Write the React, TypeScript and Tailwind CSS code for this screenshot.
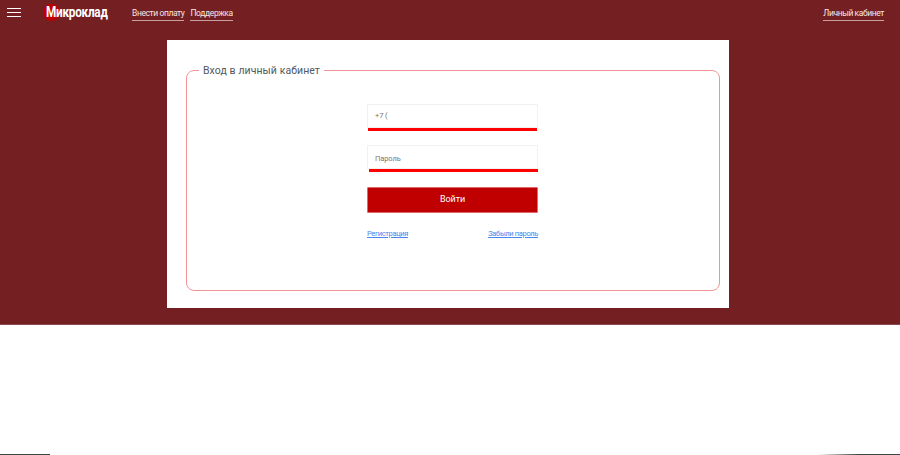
export default function App() {
  return (
    <div className="flex h-[455px] w-[900px] flex-col overflow-hidden bg-white font-['Roboto','Open_Sans',sans-serif]">
      <div className="h-[325px] border-b border-[#8a4a4d] bg-[#741f22]">
        <header className="flex h-[40px] items-start justify-between pr-[16px] pl-[7px]">
          <div className="flex items-start">
            <div className="mt-[8px] flex w-[14px] flex-col gap-[3px]">
              <span className="h-[1px] w-[14px] bg-white" />
              <span className="h-[1px] w-[14px] bg-white" />
              <span className="h-[1px] w-[14px] bg-white" />
            </div>
            <div className="relative mt-[4px] ml-[25px] w-[86px]">
              <span className="absolute top-[0px] left-[-3px] h-[17px] w-[17px] rounded-full bg-[#c00000]" />
              <span className="relative block origin-left scale-x-[0.84] text-[14px] leading-[17px] font-bold tracking-[-0.3px] whitespace-nowrap text-white">Микроклад</span>
            </div>
            <nav className="mt-[7px] flex gap-[6px] text-[8.5px] leading-[13px] tracking-[-0.4px] text-[#f4e6e6]">
              <a className="border-b border-[#c9a0a2]">Внести оплату</a>
              <a className="border-b border-[#c9a0a2]">Поддержка</a>
            </nav>
          </div>
          <a className="mt-[7px] border-b border-[#c9a0a2] text-[8.5px] leading-[13px] tracking-[-0.4px] text-[#f4e6e6]">Личный кабинет</a>
        </header>
        <main className="ml-[167px] h-[268px] w-[562px] bg-white pt-[22px] pr-[9px] pl-[19px]">
          <fieldset className="h-[229px] rounded-[8px] border border-[#f29497] pl-[12px]">
            <legend className="px-[4px] text-[10.5px] leading-[17px] tracking-[0.08px] text-[#50595f]">Вход в личный кабинет</legend>
            <div className="ml-[168px] flex w-[171px] flex-col pt-[25px]">
              <div className="flex h-[24px] items-center border border-[#f1f1f1] pl-[7px] text-[7.5px] tracking-[-0.1px] text-[#777]">+7 (</div>
              <div className="ml-[1px] h-[3px] w-[169px] bg-[#fe0000]" />
              <div className="mt-[14px] flex h-[24px] items-center border border-[#f1f1f1] pt-[3px] pl-[7px] text-[7.5px] tracking-[-0.1px] text-[#777]">Пароль</div>
              <div className="ml-[2px] h-[3px] w-[169px] bg-[#fe0000]" />
              <button className="mt-[15px] h-[26px] rounded-[1px] border border-[#e06a6a] bg-[#c00000] text-[9px] tracking-[-0.1px] text-white">Войти</button>
              <div className="mt-[15px] flex justify-between text-[7.5px] leading-[12px] tracking-[-0.35px] text-[#4a86f0] underline">
                <a>Регистрация</a>
                <a>Забыли пароль</a>
              </div>
            </div>
          </fieldset>
        </main>
      </div>
      <div className="mt-auto flex h-[1px] justify-between">
        <div className="w-[50px] bg-[#3d4545]" />
        <div className="w-[82px] bg-gradient-to-r from-white via-[#3d4545] to-[#3d4545]" />
      </div>
    </div>
  );
}
